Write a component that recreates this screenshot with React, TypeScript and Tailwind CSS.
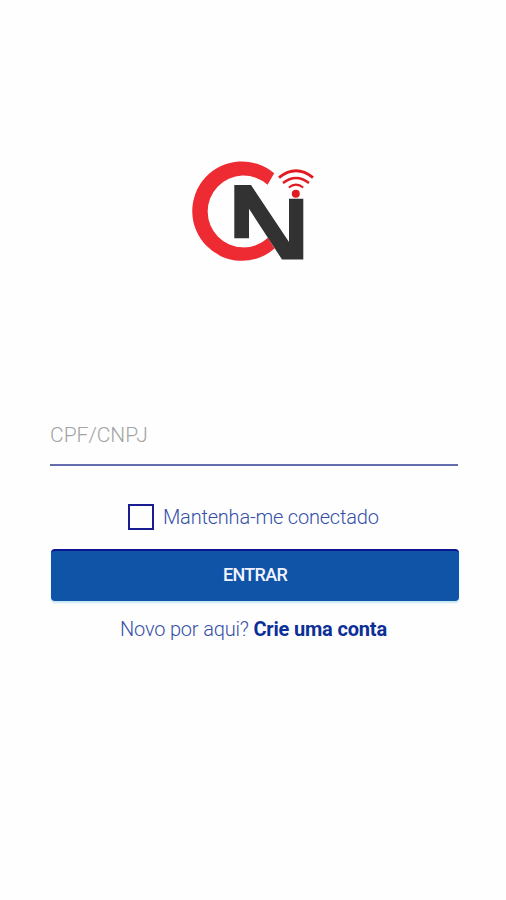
import React from 'react'

const RED = '#ee2a33'
const WIFI = '#e01b22'
const DARK = '#333233'

const Logo: React.FC = () => (
  <svg width="130" height="108" viewBox="188 156 130 108" fill="none" aria-label="CN">
    <path
      d="M274.2 173.3A49.7 49.7 0 1 0 274.6 248.6L268 237.8A35.9 35.9 0 1 1 267.6 184.8Z"
      fill={RED}
    />
    <path d="M234.3 185H251L289 242V198.7H303.3V259.5H282L249 208.8V238.2H234.3Z" fill={DARK} />
    <circle cx="295.8" cy="193.8" r="4" fill={WIFI} />
    <path d="M279 177.6Q296 164 313 177.6" stroke={WIFI} strokeWidth="3" />
    <path d="M283 183Q296 173 309 183" stroke={WIFI} strokeWidth="2.6" />
    <path d="M288.8 187.6Q296 181.6 303.2 187.6" stroke={WIFI} strokeWidth="2" />
  </svg>
)

const App: React.FC = () => (
  <main className="h-[900px] w-[506px] bg-[#fefefe] pt-39 font-['Roboto',sans-serif]">
    <div className="flex h-[108px] pl-[188px]">
      <Logo />
    </div>

    <form className="mt-[147px] pr-[47px] pl-[50px]" onSubmit={(e) => e.preventDefault()}>
      <input
        type="text"
        placeholder="CPF/CNPJ"
        aria-label="CPF/CNPJ"
        className="block h-[55px] w-[408px] border-b-2 border-[#626cae] pb-[5px] text-[21px] font-light text-[#1a3c9c] outline-none placeholder:text-[#a3a3a3]"
      />

      <label className="mt-[38px] ml-[78px] flex h-[26px] items-center gap-[9px]">
        <input type="checkbox" className="size-[26px] shrink-0 appearance-none border-2 border-[#1a1c91]" />
        <span className="text-[20px] font-light tracking-[-0.2px] whitespace-nowrap text-[#3450a6]">
          Mantenha-me conectado
        </span>
      </label>

      <button
        type="submit"
        className="mt-[19px] ml-px block h-[52px] w-[408px] rounded-[4px] border-t-2 border-[#08168f] bg-[#1054a8] pb-[4px] text-[18px] font-medium tracking-[-0.7px] text-[#f3f3ff] shadow-[0_2px_2px_#c4e6f5]"
      >
        ENTRAR
      </button>

      <p className="mt-[14px] ml-[70px] text-[20px] leading-[28px] font-light tracking-[-0.18px] whitespace-nowrap text-[#3450a6]">
        Novo por aqui? <a className="font-bold text-[#0c3096]">Crie uma conta</a>
      </p>
    </form>
  </main>
)

export default App
